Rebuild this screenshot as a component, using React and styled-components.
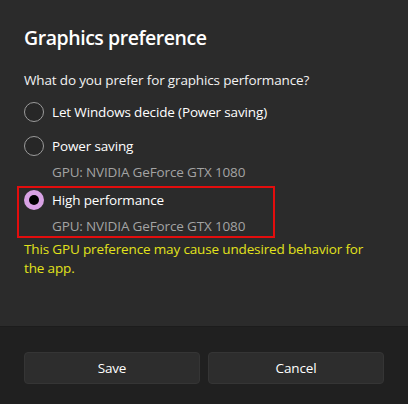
import React from 'react';
import styled, { createGlobalStyle } from 'styled-components';

const GlobalStyle = createGlobalStyle`
	html, body {
		margin: 0;
		padding: 0;
		background: #2b2b2b;
	}
	body {
		font-family: "Open Sans", "Noto Sans", sans-serif;
		-webkit-font-smoothing: antialiased;
	}
`;

const Dialog = styled.div`
	width: 408px;
	height: 404px;
	display: flex;
	flex-direction: column;
	background: #2b2b2b;
	color: #ffffff;
	overflow: hidden;
`;

const Content = styled.div`
	flex: 1;
	padding: 24px 24px 0;
	font-size: 13.5px;
	letter-spacing: -0.15px;
`;

const Title = styled.h1`
	margin: 0;
	font-size: 19.5px;
	line-height: 28px;
	font-weight: 600;
	letter-spacing: -0.45px;
	color: #ffffff;
`;

const Question = styled.p`
	margin: 18px 0 0;
	line-height: 20px;
	color: #f2f2f2;
`;

const Options = styled.div`
	display: flex;
	flex-direction: column;
	gap: 2px;
	margin-top: 6px;
`;

const Option = styled.label`
	position: relative;
	display: block;

	${({ $marked }) => $marked && `
		&::after {
			content: '';
			position: absolute;
			top: 2px;
			left: -7px;
			width: 254px;
			height: 48px;
			border: 2px solid #e30d0d;
			pointer-events: none;
		}
	`}
`;

const OptionRow = styled.div`
	display: flex;
	align-items: center;
	gap: 8px;
	height: 32px;
	color: #ffffff;
`;

const Radio = styled.span`
	box-sizing: border-box;
	width: 20px;
	height: 20px;
	border-radius: 50%;
	flex-shrink: 0;
	display: flex;
	align-items: center;
	justify-content: center;
	border: ${({ $checked }) => ($checked ? 'none' : '1.5px solid #9b9b9b')};
	background: ${({ $checked }) => ($checked ? '#d8a2e4' : '#272727')};

	&::after {
		content: '';
		display: ${({ $checked }) => ($checked ? 'block' : 'none')};
		width: 10px;
		height: 10px;
		border-radius: 50%;
		background: #000000;
	}
`;

const Gpu = styled.div`
	padding-left: 28px;
	line-height: 20px;
	color: #a3a3a3;
`;

const Warning = styled.p`
	margin: 4px 0 0;
	max-width: 350px;
	line-height: 19px;
	color: #e2e21c;
`;

const Footer = styled.div`
	height: 78px;
	box-sizing: border-box;
	padding: 25px 24px 0;
	background: #202020;
	border-top: 1px solid #1c1c1c;
	display: grid;
	grid-template-columns: 1fr 1fr;
	gap: 8px;
	align-items: start;
`;

const Button = styled.button`
	height: 32px;
	border-radius: 4px;
	border: 1px solid #353535;
	background: #2d2d2d;
	color: #ffffff;
	font-family: inherit;
	font-size: 13.5px;
	letter-spacing: -0.15px;
	cursor: pointer;
`;

const options = [
	{ label: 'Let Windows decide (Power saving)' },
	{ label: 'Power saving', gpu: 'GPU: NVIDIA GeForce GTX 1080' },
	{ label: 'High performance', gpu: 'GPU: NVIDIA GeForce GTX 1080', checked: true }
];

export default function App() {
	return (
		<>
			<GlobalStyle />
			<Dialog>
				<Content>
					<Title>Graphics preference</Title>
					<Question>What do you prefer for graphics performance?</Question>
					<Options>
						{options.map((o) => (
							<Option key={o.label} $marked={o.checked}>
								<OptionRow>
									<Radio $checked={o.checked} />
									{o.label}
								</OptionRow>
								{o.gpu && <Gpu>{o.gpu}</Gpu>}
							</Option>
						))}
					</Options>
					<Warning>This GPU preference may cause undesired behavior for the app.</Warning>
				</Content>
				<Footer>
					<Button>Save</Button>
					<Button>Cancel</Button>
				</Footer>
			</Dialog>
		</>
	);
}
